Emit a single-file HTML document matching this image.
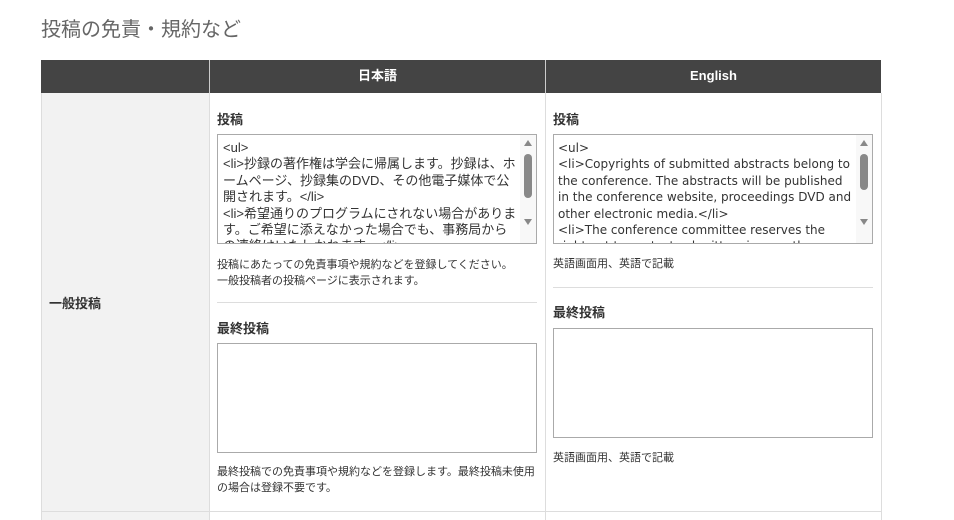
<!DOCTYPE html>
<html><head><meta charset="utf-8"><style>
body{margin:0;background:#fff;font-family:"Liberation Sans","Noto Sans CJK JP",sans-serif;color:#333;width:954px;height:520px;overflow:hidden;position:relative}
.a{position:absolute}
h1{position:absolute;left:41px;top:13px;margin:0;font-size:20px;font-weight:normal;color:#666}
.hd{background:#444;color:#fff;font-weight:bold;font-size:13px;text-align:center;line-height:31px;top:60px;height:33px}
.ta{position:absolute;border:1px solid #aaa;background:#fff;box-sizing:border-box;overflow:hidden;font-size:13px;line-height:16.4px;color:#333}
.ta .t{position:absolute;left:5px;top:5px;right:18px}
.en{font-family:"DejaVu Sans","Noto Sans CJK JP",sans-serif;font-size:12px}
.sb{position:absolute;right:0;top:0;width:16px;bottom:0;background:#f8f8f8}
.sb .th{position:absolute;left:4px;width:8px;top:19px;height:44px;background:#888;border-radius:4px}
.up,.dn{position:absolute;left:4px;width:0;height:0;border-left:4px solid transparent;border-right:4px solid transparent}
.up{top:5px;border-bottom:6px solid #888}.dn{bottom:18px;border-top:6px solid #888}
.lbl{font-size:13px;font-weight:bold}
.note{font-size:11px;line-height:16px;color:#333}
.hr{height:1px;background:#ddd}
</style></head><body>
<h1>投稿の免責・規約など</h1>
<div class="a hd" style="left:41px;width:168px"></div>
<div class="a hd" style="left:209px;width:336px;border-left:1px solid #ccc;box-sizing:border-box">日本語</div>
<div class="a hd" style="left:545px;width:336px;border-left:1px solid #ccc;box-sizing:border-box">English</div>
<div class="a" style="left:41px;top:93px;width:168px;height:427px;background:#f2f2f2;border-left:1px solid #ddd;box-sizing:border-box"></div>
<div class="a" style="left:209px;top:93px;width:1px;height:427px;background:#ddd"></div>
<div class="a" style="left:545px;top:93px;width:1px;height:427px;background:#ddd"></div>
<div class="a" style="left:881px;top:93px;width:1px;height:427px;background:#ddd"></div>
<div class="a" style="left:41px;top:511px;width:841px;height:1px;background:#ddd"></div>
<div class="a lbl" style="left:49px;top:293px">一般投稿</div>

<div class="a lbl" style="left:217px;top:109px">投稿</div>
<div class="ta" style="left:217px;top:134px;width:320px;height:110px"><div class="t">&lt;ul&gt;<br>&lt;li&gt;抄録の著作権は学会に帰属します。抄録は、ホームページ、抄録集のDVD、その他電子媒体で公開されます。&lt;/li&gt;<br>&lt;li&gt;希望通りのプログラムにされない場合があります。ご希望に添えなかった場合でも、事務局からの連絡はいたしかねます。&lt;/li&gt;</div><div class="sb"><div class="up"></div><div class="th"></div><div class="dn"></div></div></div>
<div class="a note" style="left:217px;top:257px">投稿にあたっての免責事項や規約などを登録してください。<br>一般投稿者の投稿ページに表示されます。</div>
<div class="a hr" style="left:217px;top:302px;width:320px"></div>
<div class="a lbl" style="left:217px;top:318px">最終投稿</div>
<div class="ta" style="left:217px;top:343px;width:320px;height:110px"></div>
<div class="a note" style="left:217px;top:464px">最終投稿での免責事項や規約などを登録します。最終投稿未使用<br>の場合は登録不要です。</div>

<div class="a lbl" style="left:553px;top:109px">投稿</div>
<div class="ta en" style="left:553px;top:134px;width:320px;height:110px"><div class="t" style="left:4px">&lt;ul&gt;<br>&lt;li&gt;Copyrights of submitted abstracts belong to the conference. The abstracts will be published in the conference website, proceedings DVD and other electronic media.&lt;/li&gt;<br>&lt;li&gt;The conference committee reserves the right not to contact submitters in case the</div><div class="sb"><div class="up"></div><div class="th" style="height:36px"></div><div class="dn"></div></div></div>
<div class="a note" style="left:553px;top:256px">英語画面用、英語で記載</div>
<div class="a hr" style="left:553px;top:287px;width:320px"></div>
<div class="a lbl" style="left:553px;top:302px">最終投稿</div>
<div class="ta" style="left:553px;top:328px;width:320px;height:110px"></div>
<div class="a note" style="left:553px;top:450px">英語画面用、英語で記載</div>
</body></html>
